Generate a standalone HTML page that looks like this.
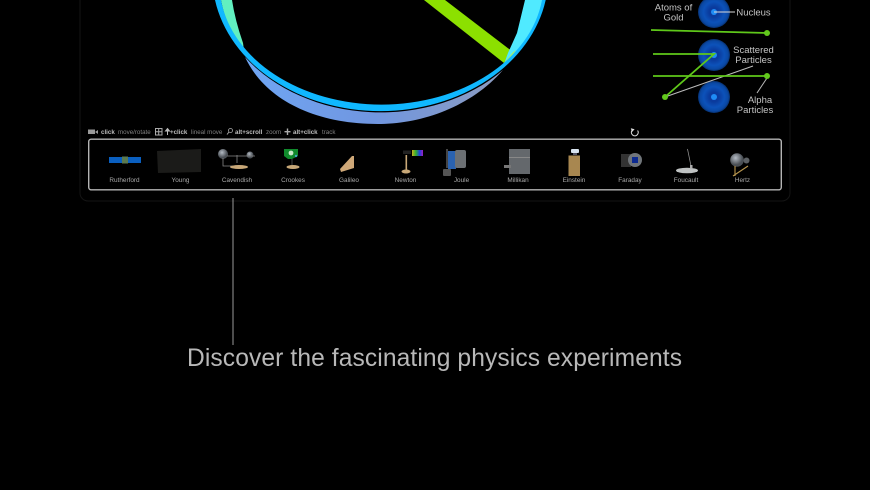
<!DOCTYPE html>
<html><head><meta charset="utf-8"><style>
html,body{margin:0;padding:0;background:#000;width:870px;height:490px;overflow:hidden}
svg{position:absolute;left:0;top:0}
text{font-family:"Liberation Sans",sans-serif}
</style></head><body>
<svg width="870" height="490" viewBox="0 0 870 490" xmlns="http://www.w3.org/2000/svg">
<defs>
<radialGradient id="at"><stop offset="0" stop-color="#0a3aa8"/><stop offset=".3" stop-color="#0a3a9c"/><stop offset=".65" stop-color="#0c52ba"/><stop offset=".88" stop-color="#0a48a4"/><stop offset="1" stop-color="#07306e"/></radialGradient>
<linearGradient id="gb" x1="0" x2="1" y1="0" y2="0"><stop offset="0" stop-color="#6fa6f4"/><stop offset=".5" stop-color="#7096e0"/><stop offset="1" stop-color="#8c9cc0"/></linearGradient>
<radialGradient id="sph" cx=".4" cy=".35"><stop offset="0" stop-color="#b5bcc5"/><stop offset="1" stop-color="#4a4f55"/></radialGradient>
<linearGradient id="rb" x1="0" x2="1" y1="0" y2="0"><stop offset="0" stop-color="#c8b020"/><stop offset=".35" stop-color="#30b030"/><stop offset=".7" stop-color="#2040e0"/><stop offset="1" stop-color="#a020c0"/></linearGradient>
</defs>

<!-- panel -->
<path d="M80 -1V193a8 8 0 0 0 8 8H782a8 8 0 0 0 8-8V-1" fill="none" stroke="#141414" stroke-width="1"/>

<!-- ring -->
<path d="M245 57C265 100 315 124 378 124C420 124 470 108 503 70A168 135 0 0 1 245 57Z" fill="url(#gb)"/>
<path d="M221 0H232Q235 20 243 43L244 50Q226 28 221 0Z" fill="#62f0c0"/>
<polygon points="424,0 445,0 513,52 504,63" fill="#8ce000"/>
<polygon points="525,0 517,33 508,53 504,64 520,50 535,25 545,0" fill="#50eaff"/>
<polygon points="513,52 504,63 508,62 516,50" fill="#a0f070"/>
<path d="M215 0A168 135 0 0 0 545.7 0H542A162 121 0 0 1 221 0Z" fill="#10b8ff"/>

<!-- diagram -->
<circle cx="714" cy="12" r="16" fill="url(#at)"/>
<circle cx="714" cy="55" r="16" fill="url(#at)"/>
<circle cx="714" cy="97" r="16" fill="url(#at)"/>
<circle cx="714" cy="12" r="3" fill="#1f8cf5"/>
<circle cx="714" cy="55" r="3" fill="#1f8cf5"/>
<circle cx="714" cy="97" r="3" fill="#1f8cf5"/>
<line x1="714" y1="12" x2="735" y2="12" stroke="#d8d8d8" stroke-width="1"/>
<line x1="753" y1="66" x2="665" y2="97" stroke="#bbb" stroke-width="1"/>
<line x1="767" y1="78" x2="757" y2="93" stroke="#bbb" stroke-width="1"/>
<g stroke="#5fc81a" stroke-width="1.8" fill="none">
<line x1="651" y1="30" x2="767" y2="33"/>
<polyline points="653,54 714,54 665,97"/>
<line x1="653" y1="76" x2="767" y2="76"/>
</g>
<g fill="#62c81c"><circle cx="767" cy="33" r="3"/><circle cx="767" cy="76" r="3"/><circle cx="665" cy="97" r="3"/></g>
<g font-size="9.5" fill="#c4c4c4" text-anchor="middle">
<text x="673.5" y="10.5">Atoms of</text><text x="673.5" y="20.5">Gold</text>
<text x="753.5" y="15.5">Nucleus</text>
<text x="753.5" y="53">Scattered</text><text x="753.5" y="63">Particles</text>
<text x="760" y="103">Alpha</text><text x="755" y="113">Particles</text>
</g>

<!-- hints -->
<g fill="#9a9a9a"><rect x="88" y="129.5" width="7" height="4.5"/><polygon points="95,132 98,130 98,134"/></g>
<text y="134" font-size="6.2" fill="#808080"><tspan x="101" font-weight="bold" fill="#bdbdbd">click</tspan><tspan x="118">move/rotate</tspan></text>
<rect x="155.5" y="128.5" width="6.5" height="6.5" fill="none" stroke="#aaa"/><path d="M158.7 128.5V135M155.5 131.7H162" stroke="#aaa"/>
<path d="M167.5 128.5L165.5 131H169.5ZM167.5 131V135" stroke="#bbb" fill="#bbb" stroke-width="1"/>
<text y="134" font-size="6.2" fill="#808080"><tspan x="170" font-weight="bold" fill="#bdbdbd">+click</tspan><tspan x="191">lineal move</tspan></text>
<circle cx="230.5" cy="130.5" r="2" fill="none" stroke="#aaa" stroke-width=".8"/><line x1="229" y1="132" x2="227" y2="134.5" stroke="#aaa"/>
<text y="134" font-size="6.2" fill="#808080"><tspan x="235" font-weight="bold" fill="#bdbdbd">alt+scroll</tspan><tspan x="266">zoom</tspan></text>
<path d="M287.5 128.5V135M284.5 131.7H290.5" stroke="#aaa" stroke-width="1.4"/>
<text y="134" font-size="6.2" fill="#808080"><tspan x="293" font-weight="bold" fill="#bdbdbd">alt+click</tspan><tspan x="322">track</tspan></text>
<path d="M637.6 130.5A3.4 3.4 0 1 1 632 130.5" fill="none" stroke="#ddd" stroke-width="1.1"/><polygon points="630.8,128.3 634.6,129.3 632,132" fill="#ddd"/>

<!-- tray -->
<rect x="88.7" y="139.2" width="692.6" height="50.6" rx="2.5" fill="#000" stroke="#b4b4b4" stroke-width="1.4"/>

<!-- thumbs -->
<rect x="109" y="157" width="32" height="6" fill="#0a5fc0"/><rect x="122" y="156.5" width="6" height="7" fill="#5a7a50"/>
<polygon points="157,151 201,149 201,172 158,173" fill="#1b1b19"/>
<circle cx="223" cy="154" r="5" fill="url(#sph)"/><circle cx="250" cy="155" r="3.5" fill="url(#sph)"/>
<path d="M223 158V166H240M237 155V163M227 156H255" stroke="#888" stroke-width=".8" fill="none"/><ellipse cx="239" cy="167" rx="9" ry="2" fill="#c8a878"/>
<path d="M284 149H298V156L292 159H288L284 156Z" fill="#108a2c"/><circle cx="291" cy="153" r="2.4" fill="#c8e8c8"/><circle cx="296" cy="156" r="1.2" fill="#40a8c0"/>
<line x1="292" y1="159" x2="292" y2="166" stroke="#444"/><ellipse cx="293" cy="167" rx="6.5" ry="2" fill="#c8a878"/>
<polygon points="340,169 352,156 354,156 354,168 341,172" fill="#cfa878"/>
<rect x="405.5" y="155" width="1.6" height="15" fill="#c8a878"/><ellipse cx="406" cy="171.5" rx="4.5" ry="2" fill="#c8a878"/>
<rect x="403" y="150.5" width="8" height="3.5" fill="#222"/><rect x="412" y="150" width="11" height="6" fill="url(#rb)"/>
<line x1="447" y1="149" x2="447" y2="168" stroke="#888"/><rect x="448" y="151" width="8" height="18" fill="#2a62b0"/><rect x="455" y="150" width="11" height="18" rx="2" fill="#6c7074"/><rect x="443" y="169" width="8" height="7" rx="1" fill="#555"/>
<rect x="509" y="149" width="21" height="25" fill="#64686c"/><rect x="504" y="165" width="7" height="3" fill="#777"/><rect x="509" y="157" width="21" height="1" fill="#888"/>
<rect x="568.5" y="155.5" width="11.5" height="20.5" fill="#a88750"/><rect x="571" y="149" width="8" height="4" rx="1" fill="#d8e4f0"/><rect x="573" y="153" width="4" height="2" fill="#556"/>
<rect x="621" y="154" width="10" height="13" fill="#333"/><circle cx="635" cy="160" r="7" fill="#70757a"/><rect x="632" y="157" width="6" height="6" fill="#0c2a90"/>
<line x1="687.5" y1="149" x2="691" y2="166" stroke="#999" stroke-width=".7"/><ellipse cx="687" cy="170.5" rx="11" ry="2.8" fill="#bfc2c2"/><rect x="690" y="165" width="2.5" height="3.5" fill="#aaa"/>
<circle cx="737" cy="160" r="6.8" fill="url(#sph)"/><circle cx="746.5" cy="160.5" r="3" fill="#5c6064"/><path d="M733 176L748 166M735 176L735 166" stroke="#b8964e" stroke-width="1.1"/>

<g font-size="6.4" fill="#a8a8a8" text-anchor="middle">
<text x="124.5" y="182">Rutherford</text><text x="180.5" y="182">Young</text><text x="237" y="182">Cavendish</text><text x="293" y="182">Crookes</text><text x="349" y="182">Galileo</text><text x="405.5" y="182">Newton</text><text x="461.5" y="182">Joule</text><text x="518" y="182">Millikan</text><text x="574" y="182">Einstein</text><text x="630" y="182">Faraday</text><text x="686" y="182">Foucault</text><text x="742.5" y="182">Hertz</text>
</g>

<!-- caption -->
<line x1="233" y1="198" x2="233" y2="345" stroke="#9a9a9a" stroke-width="1"/>
<text x="187" y="366" font-size="24.6" fill="#b8b8b8" textLength="495" lengthAdjust="spacing">Discover the fascinating physics experiments</text>
</svg>
</body></html>
